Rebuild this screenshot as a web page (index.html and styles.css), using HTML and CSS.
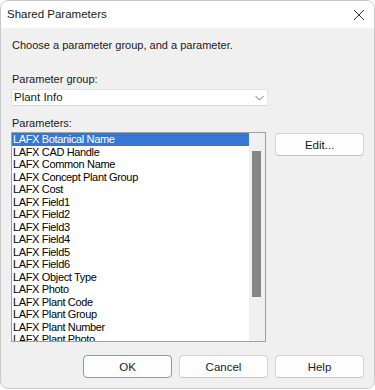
FILE: index.html
```html
<!DOCTYPE html>
<html>
<head>
<meta charset="utf-8">
<link rel="stylesheet" href="styles.css">
</head>
<body>
<div class="window">
  <div class="titlebar">
    <span class="title">Shared Parameters</span>
    <svg class="close" width="12" height="12" viewBox="0 0 12 12"><path d="M1 1 L11 11 M11 1 L1 11" stroke="#333" stroke-width="1" fill="none"/></svg>
  </div>
  <div class="content">
    <div class="intro">Choose a parameter group, and a parameter.</div>
    <div class="label group-label">Parameter group:</div>
    <div class="combo">
      <span class="combo-text">Plant Info</span>
      <svg class="chev" width="9" height="6" viewBox="0 0 9 6"><path d="M0.5 1 L4.5 5 L8.5 1" stroke="#777" stroke-width="1" fill="none"/></svg>
    </div>
    <div class="label params-label">Parameters:</div>
    <div class="list-row">
      <div class="listbox">
        <div class="items">
          <div class="item selected">LAFX Botanical Name</div>
          <div class="item">LAFX CAD Handle</div>
          <div class="item">LAFX Common Name</div>
          <div class="item">LAFX Concept Plant Group</div>
          <div class="item">LAFX Cost</div>
          <div class="item">LAFX Field1</div>
          <div class="item">LAFX Field2</div>
          <div class="item">LAFX Field3</div>
          <div class="item">LAFX Field4</div>
          <div class="item">LAFX Field5</div>
          <div class="item">LAFX Field6</div>
          <div class="item">LAFX Object Type</div>
          <div class="item">LAFX Photo</div>
          <div class="item">LAFX Plant Code</div>
          <div class="item">LAFX Plant Group</div>
          <div class="item">LAFX Plant Number</div>
          <div class="item">LAFX Plant Photo</div>
        </div>
        <div class="scrollbar"><div class="thumb"></div></div>
      </div>
      <button class="btn edit">Edit...</button>
    </div>
    <div class="footer">
      <button class="btn default">OK</button>
      <button class="btn">Cancel</button>
      <button class="btn">Help</button>
    </div>
  </div>
</div>
</body>
</html>
```
FILE: styles.css
```css
html, body {
  margin: 0;
  padding: 0;
  background: #ffffff;
}
body {
  width: 375px;
  height: 390px;
  overflow: hidden;
  font-family: "Liberation Sans", Arial, sans-serif;
  color: #1a1a1a;
}
.window {
  box-sizing: border-box;
  width: 375px;
  height: 389px;
  border: 1px solid #c9c9c9;
  border-radius: 8px;
  overflow: hidden;
  display: flex;
  flex-direction: column;
  background: #f0f0f0;
}
.titlebar {
  height: 27px;
  flex: none;
  background: #ffffff;
  display: flex;
  align-items: center;
  justify-content: space-between;
  padding: 0 9px 0 6px;
}
.title {
  font-size: 11.5px;
  line-height: 15px;
  color: #1a1a1a;
}
.close {
  display: block;
  margin-top: 0;
}
.content {
  flex: 1;
  padding: 0 10px;
  display: flex;
  flex-direction: column;
  font-size: 11px;
}
.intro {
  margin-top: 10px;
  line-height: 15px;
  padding-left: 1px;
}
.label {
  line-height: 15px;
  padding-left: 1px;
}
.group-label {
  margin-top: 19px;
}
.combo {
  box-sizing: border-box;
  margin-top: 2px;
  width: 257px;
  height: 17px;
  background: #ffffff;
  border: 1px solid #e3e3e3;
  border-bottom-color: #d6d6d6;
  border-radius: 2px;
  display: flex;
  align-items: center;
  justify-content: space-between;
  padding: 0 3px 0 2px;
}
.combo-text {
  font-size: 11.5px;
  line-height: 15px;
}
.params-label {
  margin-top: 10px;
}
.list-row {
  margin-top: 1px;
  display: flex;
  align-items: flex-start;
  gap: 9px;
}
.listbox {
  box-sizing: border-box;
  width: 256px;
  height: 210px;
  border: 1px solid #a0a0a0;
  background: #ffffff;
  display: flex;
  overflow: hidden;
}
.items {
  width: 237px;
  flex: none;
  overflow: hidden;
}
.item {
  height: 12.5px;
  line-height: 12.5px;
  font-size: 11px;
  letter-spacing: -0.35px;
  padding-left: 1px;
  color: #000;
  white-space: nowrap;
}
.item.selected {
  background: #3677d4;
  color: #ffffff;
}
.scrollbar {
  flex: 1;
  background: #f0f0f0;
  padding: 18px 0 0 3px;
}
.thumb {
  width: 9px;
  height: 146px;
  background: #858585;
}
.btn {
  box-sizing: border-box;
  width: 89px;
  height: 23px;
  background: #fdfdfd;
  border: 1px solid #d3d3d3;
  border-bottom-color: #c4c4c4;
  border-radius: 4px;
  font-family: "Liberation Sans", Arial, sans-serif;
  font-size: 11.5px;
  color: #1a1a1a;
  padding: 0;
}
.edit {
  margin-top: 1px;
}
.footer {
  margin-top: 13px;
  display: flex;
  justify-content: flex-end;
  gap: 7px;
}
.btn.default {
  border: 1px solid #6e9fd8;
}
```
